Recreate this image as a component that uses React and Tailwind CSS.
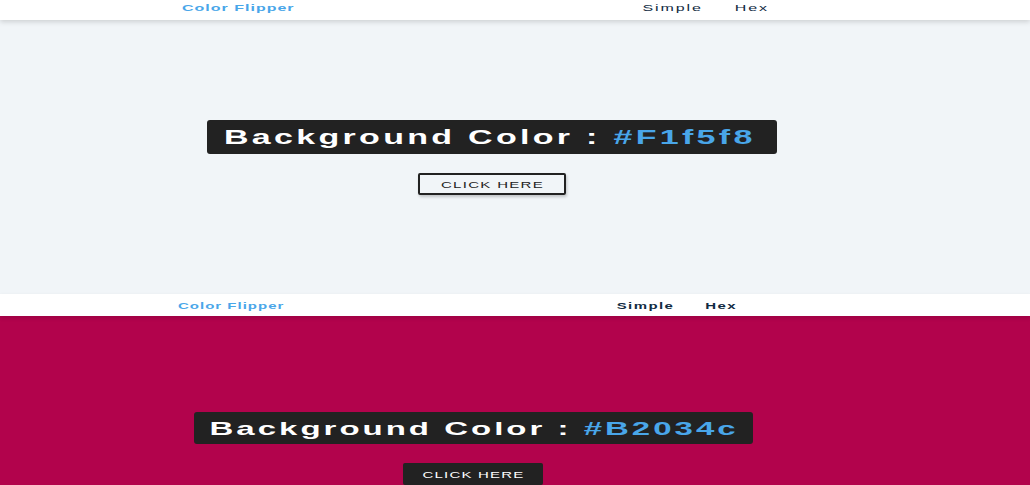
import React from 'react';

const font = { fontFamily: '"Liberation Sans", Arial, sans-serif' };

// the reference is squashed vertically, so text is drawn wide and scaled down on y
function Squash({ children, className = '' }) {
  return <span className={`inline-block scale-y-[0.58] ${className}`}>{children}</span>;
}

function Nav({ compact }) {
  if (compact) {
    return (
      <nav className="h-[22px] bg-white shadow-[0_2px_4px_rgba(0,0,0,0.12)] relative z-10 flex items-center">
        <div className="ml-[178px] w-[559px] flex items-center justify-between pt-[1px] leading-none">
          <Squash className="text-[15px] font-bold tracking-[1px] text-[#49a6e9]">Color Flipper</Squash>
          <div className="flex items-center gap-[31px] text-[15px] font-bold tracking-[1.4px] text-[#102a42]">
            <Squash>Simple</Squash>
            <Squash>Hex</Squash>
          </div>
        </div>
      </nav>
    );
  }
  return (
    <nav className="h-[20px] bg-white shadow-[0_2px_5px_rgba(0,0,0,0.15)] relative z-10 flex items-end overflow-hidden">
      <div className="ml-[182px] w-[587px] flex items-end justify-between pb-[7px] leading-none">
        <Squash className="text-[16px] font-bold tracking-[1px] text-[#49a6e9] origin-bottom">Color Flipper</Squash>
        <div className="flex items-end gap-[32px] text-[16px] tracking-[1.9px] text-[#102a42]">
          <Squash className="origin-bottom">Simple</Squash>
          <Squash className="origin-bottom">Hex</Squash>
        </div>
      </div>
    </nav>
  );
}

function Top() {
  return (
    <section className="h-[293px] bg-[#f1f5f8] flex flex-col">
      <Nav />
      <main className="flex-1 w-[984px] flex flex-col items-center justify-center gap-[19px] pt-[2px]">
        <h2 className="w-[570px] h-[34px] bg-[#222222] rounded-[3px] flex items-center pl-[17px] text-[34px] leading-none font-bold text-white whitespace-nowrap">
          <Squash className="tracking-[3.3px]">
            Background Color : <span className="text-[#49a6e9]">#F1f5f8</span>
          </Squash>
        </h2>
        <button className="w-[148px] h-[22px] border-2 border-[#222222] rounded-[2px] bg-transparent shadow-[1px_2px_3px_rgba(0,0,0,0.2)] flex items-center justify-center pl-[1px] text-[15px] leading-none text-[#222222]">
          <Squash className="tracking-[1.3px]">CLICK HERE</Squash>
        </button>
      </main>
    </section>
  );
}

function Bottom() {
  return (
    <section className="mt-[1px] flex flex-col">
      <Nav compact />
      <main className="h-[265px] bg-[#b2034c] w-full">
        <div className="w-[946px] h-full flex flex-col items-center justify-center gap-[19px]">
          <h2 className="w-[559px] h-[32px] bg-[#222222] rounded-[3px] flex items-center pl-[16px] text-[33px] leading-none font-bold text-white whitespace-nowrap">
            <Squash className="tracking-[3px]">
              Background Color : <span className="text-[#49a6e9]">#B2034c</span>
            </Squash>
          </h2>
          <button className="w-[140px] h-[22px] bg-[#222222] rounded-[2px] flex items-center justify-center pl-[1px] text-[15px] leading-none text-white">
            <Squash className="tracking-[1.2px]">CLICK HERE</Squash>
          </button>
        </div>
      </main>
    </section>
  );
}

export default function App() {
  return (
    <div className="w-[1030px] h-[485px] overflow-hidden bg-[#f1f5f8]" style={font}>
      <Top />
      <Bottom />
    </div>
  );
}
